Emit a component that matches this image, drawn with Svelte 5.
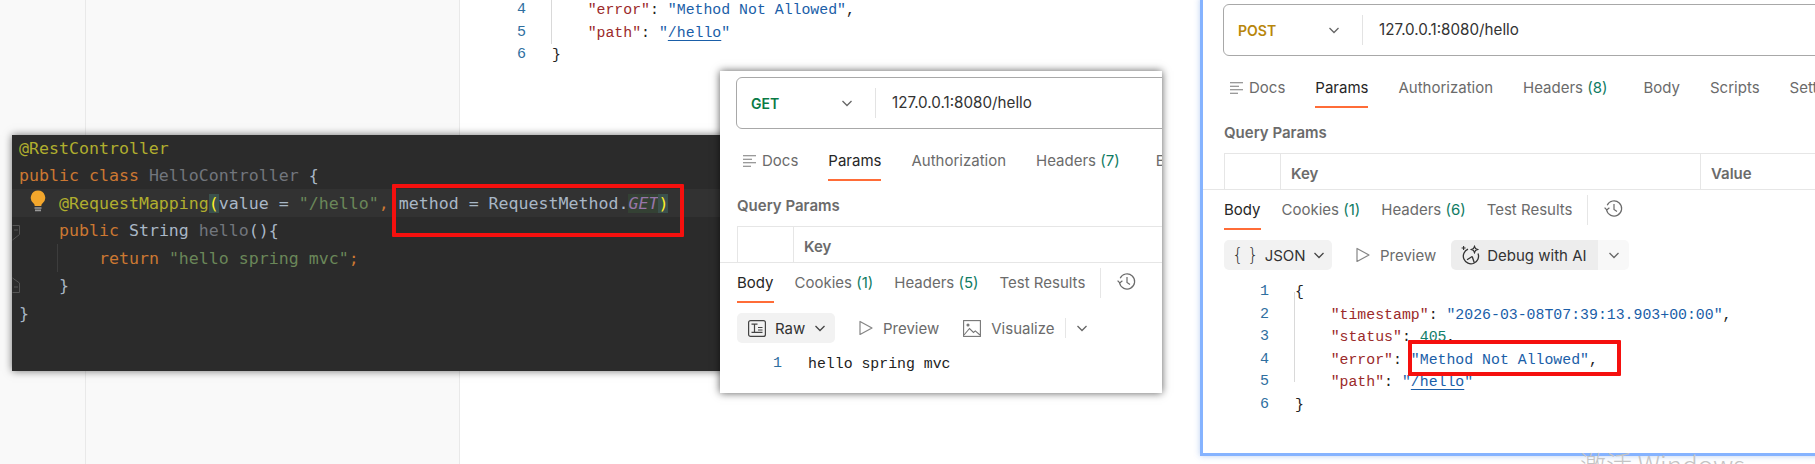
<script>
	const code = [
		[['ann', '@RestController']],
		[['kw', 'public class '], ['cls', 'HelloController '], ['txt', '{']],
		[['sp', '    '], ['ann', '@RequestMapping'], ['brace', '('], ['txt', 'value = '], ['str', '"/hello"'], ['kw', ','], ['txt', ' method = RequestMethod.'], ['get', 'GET'], ['brace', ')']],
		[['sp', '    '], ['kw', 'public '], ['txt', 'String '], ['cls', 'hello'], ['txt', '(){']],
		[['sp', '        '], ['kw', 'return '], ['str', '"hello spring mvc"'], ['kw', ';']],
		[['sp', '    '], ['txt', '}']],
		[['txt', '}']]
	];

	const json = {
		1: [['p', '{']],
		2: [['k', '    "timestamp"'], ['p', ': '], ['s', '"2026-03-08T07:39:13.903+00:00"'], ['p', ',']],
		3: [['k', '    "status"'], ['p', ': '], ['n', '405'], ['p', ',']],
		4: [['k', '    "error"'], ['p', ': '], ['s', '"Method Not Allowed"'], ['p', ',']],
		5: [['k', '    "path"'], ['p', ': '], ['s', '"'], ['l', '/hello'], ['s', '"']],
		6: [['p', '}']]
	};

	const getTabs = [
		{ label: 'Docs', icon: true },
		{ label: 'Params', active: true },
		{ label: 'Authorization' },
		{ label: 'Headers', count: '(7)' },
		{ label: 'Body' }
	];
	const postTabs = [
		{ label: 'Docs', icon: true },
		{ label: 'Params', active: true },
		{ label: 'Authorization' },
		{ label: 'Headers', count: '(8)' },
		{ label: 'Body' },
		{ label: 'Scripts' },
		{ label: 'Settings' }
	];
</script>

{#snippet chevron(color = '#555')}
	<svg class="chev" width="12" height="12" viewBox="0 0 12 12" fill="none" stroke={color} stroke-width="1.3"><path d="M1.5 4l4.5 4.5L10.5 4" /></svg>
{/snippet}

{#snippet play()}
	<svg width="14" height="16" viewBox="0 0 14 16" fill="none" stroke="#858585" stroke-width="1.2"><path d="M1 1.5v13L13 8z" stroke-linejoin="round" /></svg>
{/snippet}

{#snippet jsonRow(n)}
	<div class="row">
		<span class="ln">{n}</span>
		<span class="src">{#each json[n] as [c, t]}<span class={c}>{t}</span>{/each}</span>
	</div>
{/snippet}

{#snippet request(method, methodClass, tabs)}
	<div class="url-box">
		<span class="method {methodClass}">{method}</span>
		{@render chevron('#666')}
		<span class="url">127.0.0.1:8080/hello</span>
	</div>
	<div class="tabs">
		{#each tabs as tab}
			<div class="tab" class:active={tab.active}>
				{#if tab.icon}
					<svg width="13" height="12" viewBox="0 0 13 12" stroke="#7a7a7a" stroke-width="1.1"><path d="M0 .8h13M0 4.3h9M0 7.8h13M0 11.3h8" /></svg>
				{/if}
				{tab.label}{#if tab.count}&nbsp;<span class="count">{tab.count}</span>{/if}
			</div>
		{/each}
	</div>
	<div class="query">Query Params</div>
	<div class="table">
		<div class="cell check"></div>
		<div class="cell key">Key</div>
		<div class="cell val">Value</div>
	</div>
{/snippet}

{#snippet responseTabs(cookies, headers)}
	<div class="res-tabs">
		<div class="rtab active">Body</div>
		<div class="rtab">Cookies <span class="count">({cookies})</span></div>
		<div class="rtab">Headers <span class="count">({headers})</span></div>
		<div class="rtab">Test Results</div>
		<div class="rsep"></div>
		<svg class="history" width="20" height="20" viewBox="0 0 20 20" fill="none" stroke="#6b6b6b" stroke-width="1.2"><path d="M3.2 6.2A7.6 7.6 0 1 1 2.6 11" /><path d="M.6 8.6l2.2 2.4 2.6-2.2" /><path d="M10 5v5.4l3 2" /></svg>
	</div>
{/snippet}

<div class="canvas">
	<div class="backdrop">
		<div class="rail"></div>
		<div class="list"></div>
	</div>

	<div class="editor behind">
		{@render jsonRow(4)}
		{@render jsonRow(5)}
		{@render jsonRow(6)}
		<div class="guide"></div>
	</div>

	<div class="ide">
		<div class="caret-line"></div>
		<svg class="bulb" width="16" height="24" viewBox="0 0 16 24"><path d="M8 .5a7.2 7.2 0 0 0-4.4 12.9c.9.8 1 1.6 1.1 2.6h6.6c.1-1 .2-1.8 1.1-2.6A7.2 7.2 0 0 0 8 .5z" fill="#f2a62c" /><path d="M4.5 18h7M5 20.4h6" stroke="#9a9a9a" stroke-width="1.6" /></svg>
		<svg class="fold" width="8" height="16" viewBox="0 0 8 16" fill="none" stroke="#555" stroke-width="1"><path d="M.5.5h7v9L.5 15" /><path d="M2 5h4" /></svg>
		<svg class="fold end" width="8" height="16" viewBox="0 0 8 16" fill="none" stroke="#555" stroke-width="1"><path d="M.5 1l7 5v9.5h-7" /><path d="M2 10h4" /></svg>
		<div class="ide-guide"></div>
		{#each code as line}
			<div class="code-line">{#each line as [c, t]}<span class={c}>{t}</span>{/each}</div>
		{/each}
	</div>

	<div class="postman win-get">
		{@render request('GET', 'get', getTabs)}
		<div class="response">
			{@render responseTabs(1, 5)}
			<div class="tools">
				<div class="pill">
					<svg width="18" height="17" viewBox="0 0 18 17" fill="none" stroke="#444" stroke-width="1.2"><rect x=".6" y=".6" width="16.8" height="15.8" rx="2" /><path d="M3.5 4.2h6M6.5 4.2v8M3.5 12.4h11M10 7.5h4.5M10 10h4.5" /></svg>
					<span>Raw</span>
					{@render chevron('#444')}
				</div>
				<div class="tool preview">{@render play()}<span>Preview</span></div>
				<div class="tool visual">
					<svg width="18" height="17" viewBox="0 0 18 17" fill="none" stroke="#757575" stroke-width="1.1"><rect x=".6" y=".6" width="16.8" height="15.8" /><path d="M1 15l5.5-6.5 4 4 1.8-1.6 4.7 4.1" /><circle cx="5" cy="5" r="1" fill="#757575" /></svg>
					<span>Visualize</span>
				</div>
				<div class="tool-sep"></div>
				{@render chevron('#666')}
			</div>
			<div class="row plain">
				<span class="ln">1</span>
				<span class="src"><span class="p">hello spring mvc</span></span>
			</div>
		</div>
	</div>

	<div class="postman win-post">
		{@render request('POST', 'post', postTabs)}
		<div class="response">
			{@render responseTabs(1, 6)}
			<div class="tools">
				<div class="pill json">
					<span class="braces">{'{ }'}</span>
					<span>JSON</span>
					{@render chevron('#444')}
				</div>
				<div class="tool preview">{@render play()}<span>Preview</span></div>
				<div class="debug">
					<div class="debug-main">
						<svg width="21" height="20" viewBox="0 0 21 20" fill="none" stroke="#333" stroke-width="1.3"><path d="M7 4.2a7.6 7.6 0 1 0 10 4.2" /><path d="M11.2 11.5L6 14.8M11.2 11.5l2 6" /><path d="M2.6 1v4M.6 3h4M13.5 1.2l1 2.3 2.3 1-2.3 1-1 2.3-1-2.3-2.3-1 2.3-1z" stroke-width="1.1" /></svg>
						<span>Debug with AI</span>
					</div>
					<div class="debug-more">{@render chevron('#666')}</div>
				</div>
			</div>
			<div class="lines">
				<div class="guide"></div>
				{#each [1, 2, 3, 4, 5, 6] as n}
					{@render jsonRow(n)}
				{/each}
			</div>
		</div>
	</div>

	<div class="mark mark-ide"></div>
	<div class="mark mark-json"></div>
	<div class="watermark">激活 Windows</div>
</div>

<style>
	:global(body) {
		margin: 0;
		overflow: hidden;
		background: #fff;
	}

	.canvas {
		position: relative;
		width: 1815px;
		height: 464px;
		overflow: hidden;
		background: #fff;
	}

	.backdrop {
		display: flex;
		width: 460px;
		height: 464px;
		background: #f9f9f9;
	}

	.rail {
		width: 85px;
		border-right: 1px solid #e9e9e9;
	}

	.list {
		flex: 1;
		border-right: 1px solid #e9e9e9;
	}

	/* json rows, shared by the response panes */
	.row {
		display: flex;
		height: 22.6px;
		line-height: 22.6px;
		font-family: 'Liberation Mono', monospace;
		font-size: 14.85px;
		white-space: pre;
	}

	.ln {
		width: 71px;
		padding-left: 36px;
		box-sizing: border-box;
		font-family: 'Liberation Mono', monospace;
		font-size: 15px;
		color: #2f6f9f;
	}

	.k {
		color: #9b2a2a;
	}

	.s {
		color: #1a5ea8;
	}

	.n {
		color: #12806a;
	}

	.p {
		color: #222;
	}

	.l {
		color: #1a5ea8;
		text-decoration: underline;
		text-underline-offset: 3px;
	}

	.editor.behind {
		position: absolute;
		left: 481px;
		top: -1px;
	}

	.guide {
		position: absolute;
		left: 70px;
		top: 0;
		width: 1px;
		height: 45px;
		background: #d9d9d9;
	}

	/* dark ide window */
	.ide {
		position: absolute;
		left: 12px;
		top: 135px;
		width: 720px;
		height: 236px;
		background: #2b2b2b;
		box-shadow: 0 0 8px rgba(0, 0, 0, 0.55);
		font-family: 'DejaVu Sans Mono', monospace;
		font-size: 16.6px;
		color: #a9b7c6;
	}

	.code-line {
		position: relative;
		height: 27.6px;
		line-height: 27.6px;
		padding-left: 7px;
		white-space: pre;
		top: -0.5px;
	}

	.caret-line {
		position: absolute;
		left: 0;
		right: 0;
		top: 54px;
		height: 28px;
		background: #323232;
	}

	.bulb {
		position: absolute;
		left: 18px;
		top: 55px;
	}

	.fold {
		position: absolute;
		left: 0;
		top: 90px;
	}

	.fold.end {
		top: 142px;
	}

	.ide-guide {
		position: absolute;
		left: 45px;
		top: 109px;
		width: 1px;
		height: 28px;
		background: #3d3d3d;
	}

	.ann {
		color: #b0ae2e;
	}

	.kw {
		color: #cc7832;
	}

	.cls {
		color: #72767d;
	}

	.txt {
		color: #a9b7c6;
	}

	.str {
		color: #6a8759;
	}

	.brace {
		color: #ffef28;
		background: #3b514d;
	}

	.get {
		color: #9876aa;
		font-style: italic;
		background: #344134;
	}

	/* postman windows */
	.postman {
		position: absolute;
		background: #fff;
		overflow: hidden;
		box-shadow: 0 0 8px rgba(0, 0, 0, 0.65);
		font-family: Inter, sans-serif;
		color: #6b6b6b;
	}

	.win-get {
		left: 720px;
		top: 71px;
		width: 442px;
		height: 322px;
		--pad: 17px;
	}

	.win-post {
		left: 1200px;
		top: -2px;
		width: 640px;
		height: 458px;
		--pad: 21px;
		border-left: 3px solid #85b3ff;
		border-bottom: 3px solid #85b3ff;
		box-shadow: 0 0 6px rgba(60, 120, 220, 0.35);
		box-sizing: border-box;
	}

	.url-box {
		display: flex;
		align-items: center;
		width: 640px;
		height: 52px;
		box-sizing: border-box;
		margin: 6px 0 0 calc(var(--pad) - 1px);
		border: 1px solid #a8a8a8;
		border-radius: 6px;
		padding-left: 14px;
	}

	.method {
		width: 90px;
		font-size: 14px;
		font-weight: 600;
	}

	.method.get {
		color: #0a7a45;
		font-style: normal;
		background: none;
	}

	.method.post {
		color: #b8860b;
	}

	.url {
		margin-left: 22px;
		padding: 5px 0 5px 16px;
		border-left: 1px solid #e3e3e3;
		font-size: 15.2px;
		line-height: 20px;
		color: #333;
	}

	.tabs {
		display: flex;
		gap: 30px;
		margin: 21px 0 0 calc(var(--pad) + 6px);
		white-space: nowrap;
	}

	.tab {
		display: flex;
		align-items: center;
		gap: 6px;
		height: 22px;
		padding-bottom: 7px;
		border-bottom: 2px solid transparent;
		font-size: 15px;
		line-height: 22px;
	}

	.tab.active {
		color: #262626;
		border-bottom-color: #ff6c37;
	}

	.tab .count {
		margin: 0 6px 0 -6px;
	}

	.count {
		color: #0f7b63;
	}

	.query {
		margin: 15px 0 0 var(--pad);
		font-size: 15px;
		font-weight: 600;
		line-height: 20px;
		color: #6b6b6b;
	}

	.table {
		display: flex;
		height: 36px;
		box-sizing: border-box;
		width: 640px;
		margin: 10px 0 0 var(--pad);
		border-top: 1px solid #e6e6e6;
		border-left: 1px solid #e6e6e6;
		font-size: 15px;
		font-weight: 600;
		line-height: 20px;
	}

	.cell {
		padding: 10px;
		box-sizing: border-box;
	}

	.check {
		width: 56px;
		border-right: 1px solid #e6e6e6;
	}

	.key {
		width: 420px;
		border-right: 1px solid #e6e6e6;
	}

	.response {
		border-top: 1px solid #e6e6e6;
		padding: 0 0 0 var(--pad);
		background: #fff;
	}

	.res-tabs {
		display: flex;
		gap: 21px;
		align-items: flex-start;
		padding-top: 9px;
		font-size: 15px;
		line-height: 22px;
		white-space: nowrap;
	}

	.rtab {
		height: 22px;
		padding-bottom: 7px;
		border-bottom: 2px solid transparent;
	}

	.rtab.active {
		color: #262626;
		border-bottom-color: #ff6c37;
	}

	.rsep {
		width: 1px;
		height: 30px;
		margin: -4px 0 0 -6px;
		background: #e6e6e6;
	}

	.history {
		margin-left: -5px;
	}

	.tools {
		display: flex;
		align-items: center;
		height: 30px;
		margin-top: 10px;
		font-size: 15px;
		white-space: nowrap;
	}

	.tools > :global(.chev) {
		margin-left: 10px;
	}

	.pill {
		display: flex;
		align-items: center;
		gap: 9px;
		width: 98px;
		height: 30px;
		box-sizing: border-box;
		padding-left: 11px;
		border-radius: 5px;
		background: #f2f2f2;
		color: #333;
	}

	.pill.json {
		width: 108px;
		gap: 7px;
		padding-left: 8px;
	}

	.braces {
		font-family: 'DejaVu Sans', sans-serif;
		font-size: 18px;
		font-weight: 300;
		letter-spacing: -1px;
		line-height: 30px;
	}

	.tool {
		display: flex;
		align-items: center;
		gap: 10px;
	}

	.preview {
		margin-left: 24px;
	}

	.visual {
		margin-left: 24px;
	}

	.tool-sep {
		width: 1px;
		height: 20px;
		margin-left: 10px;
		background: #e6e6e6;
	}

	.debug {
		display: flex;
		height: 30px;
		margin-left: 15px;
		border-radius: 5px;
		overflow: hidden;
		color: #333;
	}

	.debug-main {
		display: flex;
		align-items: center;
		gap: 5px;
		width: 147px;
		box-sizing: border-box;
		padding-left: 10px;
		background: #ededed;
	}

	.debug-more {
		display: flex;
		align-items: center;
		justify-content: center;
		width: 31px;
		background: #f8f8f8;
	}

	.row.plain {
		margin-top: 10px;
	}

	.lines {
		position: relative;
		margin-top: 11px;
	}

	.lines .guide {
		top: 11px;
		height: 90px;
	}

	/* annotations dropped on top of the screenshots */
	.mark {
		position: absolute;
		box-sizing: border-box;
		border: 4px solid #f5100e;
		border-radius: 1px;
	}

	.mark-ide {
		left: 392px;
		top: 184px;
		width: 292px;
		height: 53px;
	}

	.mark-json {
		left: 1408px;
		top: 340px;
		width: 213px;
		height: 36px;
	}

	.watermark {
		position: absolute;
		left: 1580px;
		top: 446px;
		font-family: 'Noto Sans CJK SC', 'Noto Sans', sans-serif;
		font-size: 26px;
		font-weight: 300;
		line-height: 36px;
		color: #c4c4c4;
		white-space: nowrap;
	}
</style>
